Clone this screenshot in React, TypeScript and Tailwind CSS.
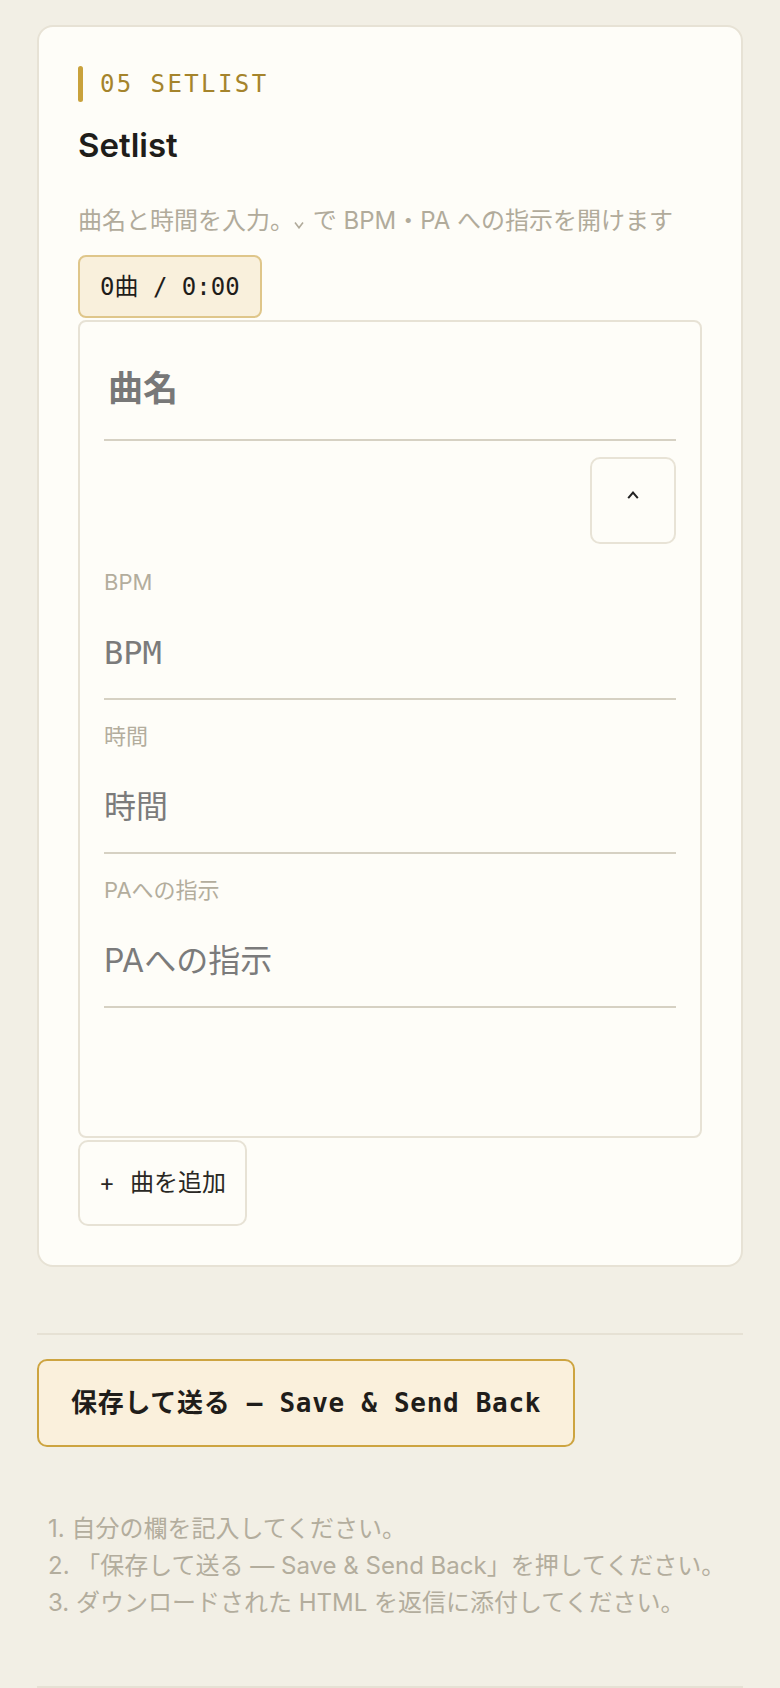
const SANS = "font-['Inter','Noto_Sans_CJK_JP',sans-serif]"
const MONO = "font-['DejaVu_Sans_Mono','Noto_Sans_CJK_JP',monospace]"

function Field({ label, placeholder, mono, first }: { label: string; placeholder: string; mono?: boolean; first?: boolean }) {
  return (
    <label className={`block ${first ? 'mt-[22px]' : 'mt-[20px]'}`}>
      <span className="block text-[22px] leading-[33px] text-[#b3ad9d]">{label}</span>
      <input
        placeholder={placeholder}
        className={`mt-[8px] block h-[93px] w-full border-b-2 border-[#d6d1c3] bg-transparent text-[32px] text-[#1f1d1a] outline-none placeholder:text-[#7b7b7b] ${mono ? MONO : SANS}`}
      />
    </label>
  )
}

export default function App() {
  return (
    <div className={`min-h-screen bg-[#f2efe5] px-[37px] pt-[25px] pb-[2px] ${SANS}`}>
      <section className="rounded-[16px] border-2 border-[#e7e2d5] bg-[#fefdf8] p-[39px]">
        <div className="flex h-[36px] items-center gap-[17px]">
          <span className="h-full w-[5px] rounded-full bg-[#c9a23c]" />
          <span className={`${MONO} text-[24px] tracking-[2.4px] text-[#a5842c]`}>05 SETLIST</span>
        </div>
        <h2 className="mt-[23px] text-[33px] leading-[40px] font-semibold text-[#1f1d1a]">Setlist</h2>
        <p className="mt-[38px] text-[24px] leading-[36px] text-[#b1ab9b]">
          曲名と時間を入力。
          <svg width="10" height="8" viewBox="0 0 10 8" fill="none" className="mr-[2px] inline-block align-baseline">
            <path d="M1 1.5 L5 6.8 L9 1.5" stroke="#b1ab9b" strokeWidth="1.6" />
          </svg>{' '}
          で BPM・PA への指示を開けます
        </p>
        <div className={`mt-[16px] flex h-[63px] w-fit items-center rounded-[8px] border-2 border-[#dfc68a] bg-[#f9f0dc] px-[20px] ${MONO} text-[24px] text-[#1f1d1a]`}>
          0曲 / 0:00
        </div>

        {/* song row, expanded */}
        <div className="mt-[2px] rounded-[8px] border-2 border-[#e7e2d5] px-[24px] pt-[24px] pb-[24px]">
          <input
            placeholder="曲名"
            className="block h-[95px] w-full border-b-2 border-[#d6d1c3] bg-transparent pb-[10px] pl-[4px] text-[35px] font-bold text-[#1f1d1a] outline-none placeholder:text-[#787878]"
          />
          <div className="mt-[16px] flex justify-end">
            <button className="flex h-[87px] w-[86px] items-center justify-center rounded-[10px] border-2 border-[#e8e3d6] pb-[11px]">
              <svg width="12" height="8" viewBox="0 0 12 8" fill="none">
                <path d="M1.2 7.2 L6 1.6 L10.8 7.2" stroke="#222" strokeWidth="2" />
              </svg>
            </button>
          </div>
          <Field first label="BPM" placeholder="BPM" mono />
          <Field label="時間" placeholder="時間" mono />
          <Field label="PAへの指示" placeholder="PAへの指示" />
          <div className="h-[104px]" />
        </div>

        <button className="mt-[2px] flex h-[86px] w-fit items-center gap-[15px] rounded-[10px] border-2 border-[#e7e2d5] px-[19px] text-[24px] text-[#2a2824]">
          <span>+</span>
          <span>曲を追加</span>
        </button>
      </section>

      <div className="mt-[66px] h-[2px] bg-[#e6e1d4]" />

      <button className={`mt-[24px] flex h-[88px] w-fit items-center rounded-[10px] border-2 border-[#cda440] bg-[#faf0dc] px-[32px] ${MONO} text-[26px] font-bold tracking-[0.7px] text-[#1f1d1a]`}>
        保存して送る — Save &amp; Send Back
      </button>

      <ol className="mt-[63px] pl-[11px] text-[24px] leading-[37px] text-[#b3ad9d]">
        <li>1. 自分の欄を記入してください。</li>
        <li>2. 「保存して送る — Save &amp; Send Back」を押してください。</li>
        <li>3. ダウンロードされた HTML を返信に添付してください。</li>
      </ol>

      <div className="mt-[65px] h-[2px] bg-[#e6e1d4]" />
    </div>
  )
}
